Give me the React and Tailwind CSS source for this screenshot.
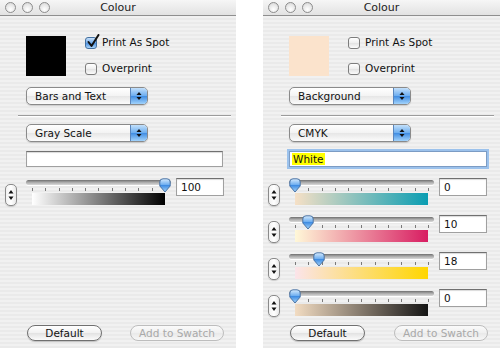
import React from 'react'

const stripes = "bg-[image:repeating-linear-gradient(180deg,#f1f1f1_0px,#f1f1f1_2px,#eaeaea_2px,#eaeaea_4px)]"

const Circle = () => (
    <span className="w-[11px] h-[11px] rounded-full border border-[#8d8d8d] bg-[radial-gradient(circle_at_50%_70%,#ffffff,#e6e6e6_60%,#cfcfcf)]"></span>
)

const TitleBar = () => (
    <div className="h-[16px] flex items-center border-b border-[#8f8f8f] bg-[linear-gradient(#f6f6f6,#e2e2e2)]">
        <div className="w-[58px] flex gap-[6px] pl-[5px]">
            <Circle /><Circle /><Circle />
        </div>
        <span className="flex-1 text-center text-[11px] leading-[15px] text-[#222]">Colour</span>
        <div className="w-[58px]"></div>
    </div>
)

const Arrows = () => (
    <svg width="6" height="10" viewBox="0 0 6 10">
        <path d="M3 1 L5.5 4 L0.5 4 Z" fill="#111" />
        <path d="M3 9 L5.5 6 L0.5 6 Z" fill="#111" />
    </svg>
)

const Check = ({ checked, label }) => (
    <div className="h-[14px] flex items-center gap-[5px]">
        <span className={checked
            ? "relative w-[12px] h-[12px] rounded-[3px] border border-[#44709f] bg-[linear-gradient(#c6e0fa,#6fa8e8_50%,#4c90e0_51%,#a9d4fb)]"
            : "relative w-[12px] h-[12px] rounded-[3px] border border-[#7d7d7d] bg-[linear-gradient(#ffffff,#eeeeee_50%,#e2e2e2_51%,#fbfbfb)]"}>
            {checked && (
                <svg className="absolute -top-[4px] left-[1px]" width="13" height="14" viewBox="0 0 13 14">
                    <path d="M1.5 8 L4.5 12 L11.5 1" stroke="#111" strokeWidth="2" fill="none" strokeLinecap="round" strokeLinejoin="round" />
                </svg>
            )}
        </span>
        <span className="text-[10.5px] text-[#111]">{label}</span>
    </div>
)

const Popup = ({ label }) => (
    <div className="ml-[26px] w-[122px] h-[18px] flex rounded-[5px] border border-[#8a8a8a] bg-[linear-gradient(#ffffff,#f3f3f3_50%,#e6e6e6_51%,#fbfbfb)] overflow-hidden shadow-[0_1px_1px_rgba(0,0,0,0.15)]">
        <span className="flex-1 pl-[8px] text-[10.5px] leading-[16px] text-[#111]">{label}</span>
        <span className="w-[17px] flex items-center justify-center border-l border-[#5a86bd] bg-[linear-gradient(#c3e0fb,#6aacef_50%,#3f8ce2_51%,#a2d3fc)]">
            <Arrows />
        </span>
    </div>
)

const Stepper = () => (
    <div className="ml-[5px] mt-[6px] w-[12px] h-[22px] rounded-[5px] border border-[#8a8a8a] bg-[linear-gradient(90deg,#f2f2f2,#ffffff_50%,#e9e9e9)] flex items-center justify-center shadow-[0_1px_1px_rgba(0,0,0,0.15)]">
        <svg width="6" height="14" viewBox="0 0 6 14">
            <path d="M3 2 L5.5 5.5 L0.5 5.5 Z" fill="#111" />
            <path d="M3 12 L5.5 8.5 L0.5 8.5 Z" fill="#111" />
        </svg>
    </div>
)

const Thumb = () => (
    <svg width="12" height="15" viewBox="0 0 12 15">
        <defs>
            <linearGradient id="tg" x1="0" y1="0" x2="0" y2="1">
                <stop offset="0" stopColor="#d6ebfd" />
                <stop offset="0.45" stopColor="#6eaef0" />
                <stop offset="0.5" stopColor="#3f8ce2" />
                <stop offset="1" stopColor="#a6d5fb" />
            </linearGradient>
        </defs>
        <path d="M0.8 4 Q0.8 0.8 4 0.8 H8 Q11.2 0.8 11.2 4 V8 L6 14 L0.8 8 Z" fill="url(#tg)" stroke="#3f6a9d" strokeWidth="0.9" />
    </svg>
)

const SliderRow = ({ value, from, to }) => (
    <div className="flex items-start h-[28px]">
        <Stepper />
        <div className="relative ml-[9px] w-[145px]">
            <div className="mt-[2px] h-[5px] rounded-full bg-[linear-gradient(#6f6f6f,#a9a9a9_45%,#dadada)] shadow-[0_1px_0_#ffffff]"></div>
            <div className="ml-[6px] w-[134px] mt-[3px] h-[3px] flex justify-between">
                {Array.from({ length: 11 }).map((_, i) => <span key={i} className="w-px h-[3px] bg-[#7a7a7a]"></span>)}
            </div>
            <div className="ml-[6px] w-[133px] mt-[2px] h-[12px]" style={{ background: `linear-gradient(90deg, ${from}, ${to})` }}></div>
            <div className="absolute top-0" style={{ left: value * 1.33 }}><Thumb /></div>
        </div>
        <div className="ml-[5px] w-[48px] h-[18px] bg-white border border-[#a0a0a0] border-t-[#707070] shadow-[inset_0_1px_1px_rgba(0,0,0,0.15)] pl-[4px] text-[10.5px] leading-[16px] text-[#111]">{value}</div>
    </div>
)

const Buttons = () => (
    <div className="mt-auto mb-[7px] flex items-center">
        <div className="ml-[27px] w-[75px] h-[16px] rounded-full border border-[#707070] bg-[linear-gradient(#ffffff,#f1f1f1_50%,#e2e2e2_51%,#fbfbfb)] shadow-[0_1px_1px_rgba(0,0,0,0.2)] text-center text-[10.5px] leading-[14px] text-[#111]">Default</div>
        <div className="ml-auto mr-[12px] w-[94px] h-[16px] rounded-full border border-[#bdbdbd] bg-[linear-gradient(#fafafa,#f0f0f0_50%,#e9e9e9_51%,#f7f7f7)] text-center text-[10.5px] leading-[14px] text-[#a9a9a9]">Add to Swatch</div>
    </div>
)

const Window = ({ width, swatch, spot, mode, model, field, focused, rows }) => (
    <div className={`${width} h-[348px] flex flex-col ${stripes}`}>
        <TitleBar />
        <div className="mt-[20px] flex">
            <div className="ml-[26px] w-[40px] h-[40px]" style={{ background: swatch }}></div>
            <div className="ml-[19px] flex flex-col gap-[12px]">
                <Check checked={spot} label="Print As Spot" />
                <Check checked={false} label="Overprint" />
            </div>
        </div>
        <div className="mt-[11px]"><Popup label={mode} /></div>
        <div className="mt-[10px] ml-[18px] w-[213px] h-px bg-[#9c9c9c] shadow-[0_1px_0_#ffffff]"></div>
        <div className="mt-[8px]"><Popup label={model} /></div>
        <div className={focused
            ? "mt-[9px] ml-[26px] w-[198px] h-[16px] bg-white border border-[#7c9cc4] shadow-[0_0_0_2px_#9cc2ec] pl-[2px] text-[10.5px] leading-[14px] text-[#111]"
            : "mt-[9px] ml-[26px] w-[197px] h-[16px] bg-white border border-[#a0a0a0] border-t-[#707070] shadow-[inset_0_1px_1px_rgba(0,0,0,0.15)]"}>
            {field && <span className="bg-[#ffff00] px-px">{field}</span>}
        </div>
        <div className="mt-[11px] flex flex-col gap-[9px]">
            {rows.map((r, i) => <SliderRow key={i} {...r} />)}
        </div>
        <Buttons />
    </div>
)

const App = () => {
    return (
        <div className="w-[500px] h-[348px] bg-white flex gap-[27px] font-['DejaVu_Sans',sans-serif] overflow-hidden">
            <Window
                width="w-[236px]"
                swatch="#000000"
                spot={true}
                mode="Bars and Text"
                model="Gray Scale"
                rows={[{ value: 100, from: '#ffffff', to: '#000000' }]}
            />
            <Window
                width="w-[237px]"
                swatch="#fbe3cc"
                spot={false}
                mode="Background"
                model="CMYK"
                field="White"
                focused={true}
                rows={[
                    { value: 0, from: '#f6e0c6', to: '#0a9db2' },
                    { value: 10, from: '#fff8d8', to: '#d81d62' },
                    { value: 18, from: '#fbe4ea', to: '#ffd600' },
                    { value: 0, from: '#f2dcc2', to: '#151515' },
                ]}
            />
        </div>
    )
}

export default App
